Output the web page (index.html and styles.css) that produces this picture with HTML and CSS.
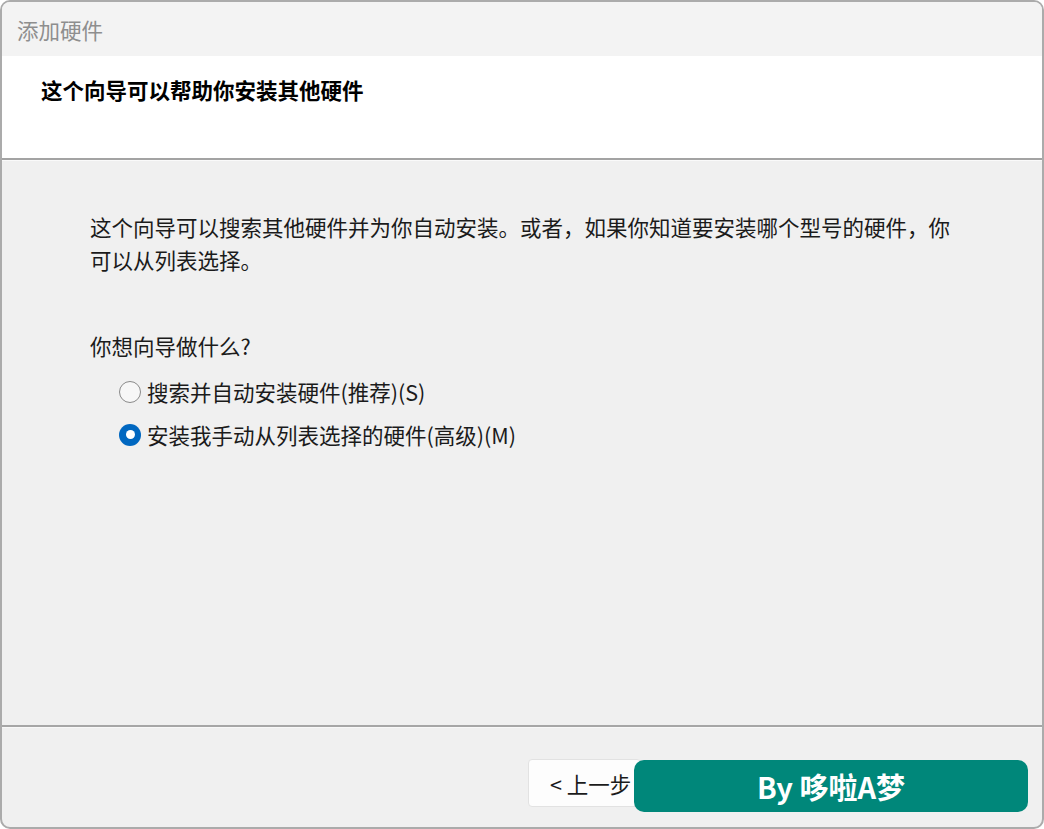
FILE: index.html
```html
<!DOCTYPE html>
<html lang="zh-CN">
<head>
<meta charset="utf-8">
<title>添加硬件</title>
<link rel="stylesheet" href="styles.css">
</head>
<body>
<div class="window">
  <div class="titlebar">添加硬件</div>
  <div class="header">
    <h1 class="header-title">这个向导可以帮助你安装其他硬件</h1>
  </div>
  <div class="content">
    <p class="intro">这个向导可以搜索其他硬件并为你自动安装。或者，如果你知道要安装哪个型号的硬件，你可以从列表选择。</p>
    <p class="question">你想向导做什么?</p>
    <div class="options">
      <label class="option"><span class="radio"></span><span>搜索并自动安装硬件(推荐)(S)</span></label>
      <label class="option"><span class="radio checked"></span><span>安装我手动从列表选择的硬件(高级)(M)</span></label>
    </div>
  </div>
  <div class="footer">
    <div class="buttons">
      <button class="btn">&lt; 上一步</button>
    </div>
  </div>
  <div class="watermark">By 哆啦A梦</div>
</div>
</body>
</html>
```
FILE: styles.css
```css
html, body {
  margin: 0;
  padding: 0;
  background: #ffffff;
}
body {
  font-family: "Noto Sans CJK SC", "Noto Sans", sans-serif;
  color: #1b1b1b;
}
.window {
  position: relative;
  width: 1044px;
  height: 829px;
  box-sizing: border-box;
  border: 2px solid #ababab;
  border-radius: 10px;
  overflow: hidden;
  display: flex;
  flex-direction: column;
  background: #f0f0f0;
}
.titlebar {
  height: 54px;
  flex: none;
  background: #f3f3f3;
  padding-left: 15px;
  display: flex;
  align-items: center;
  font-size: 21.5px;
  color: #8e8e8e;
}
.header {
  height: 104px;
  flex: none;
  box-sizing: border-box;
  background: #ffffff;
  border-bottom: 2px solid #a3a3a3;
  padding: 19px 0 0 39px;
  box-shadow: 0 1px 0 #fafafa;
}
.header-title {
  margin: 0;
  font-size: 21.5px;
  line-height: 30px;
  font-weight: 700;
  color: #000;
}
.content {
  flex: 1;
  padding: 50px 70px 0 88px;
}
.intro {
  margin: 0;
  font-size: 21.5px;
  line-height: 33px;
  width: 870px;
}
.question {
  margin: 53px 0 0;
  font-size: 21.5px;
  line-height: 33px;
}
.options {
  margin-top: 13px;
  padding-left: 29px;
  display: flex;
  flex-direction: column;
  gap: 10px;
}
.option {
  display: flex;
  align-items: center;
  gap: 6px;
  font-size: 21.5px;
  line-height: 33px;
}
.radio {
  width: 22px;
  height: 22px;
  box-sizing: border-box;
  border-radius: 50%;
  border: 1.5px solid #8a8a8a;
  background: #f7f7f7;
  position: relative;
  flex: none;
}
.radio.checked {
  border: none;
  background: #0067c0;
}
.radio.checked::after {
  content: "";
  position: absolute;
  left: 6.5px;
  top: 6.5px;
  width: 9px;
  height: 9px;
  border-radius: 50%;
  background: #ffffff;
}
.footer {
  height: 102px;
  flex: none;
  box-sizing: border-box;
  border-top: 2px solid #a6a6a6;
  box-shadow: inset 0 1px 0 #f8f8f8;
  padding: 32px 0 0 526px;
}
.buttons {
  display: flex;
}
.btn {
  width: 113px;
  height: 48px;
  box-sizing: border-box;
  background: #fdfdfd;
  border: 1px solid #e2e2e2;
  border-radius: 4px;
  font-family: "Noto Sans CJK SC", "Noto Sans", sans-serif;
  font-size: 21.5px;
  color: #1b1b1b;
  text-align: left;
  padding: 0 0 0 21px;
  white-space: nowrap;
}
.watermark {
  position: absolute;
  left: 632px;
  top: 758px;
  width: 394px;
  height: 52px;
  border-radius: 10px;
  background: #00877a;
  color: #ffffff;
  font-size: 29px;
  font-weight: 700;
  display: flex;
  align-items: center;
  justify-content: center;
}
```
